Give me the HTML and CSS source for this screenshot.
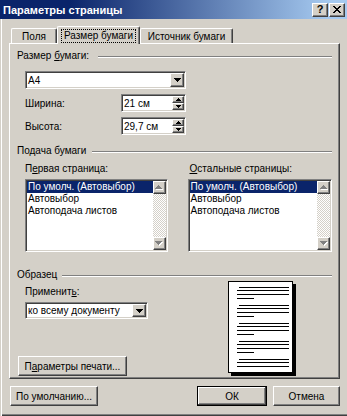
FILE: index.html
```html
<!DOCTYPE html>
<html lang="ru">
<head>
    <meta charset="UTF-8">
    <title>Параметры страницы</title>
    <link rel="stylesheet" href="styles.css">
</head>
<body>
    <div class="window">
        <div class="titlebar">
            <span class="title">Параметры страницы</span>
            <div class="caption">
                <span class="cap-btn help">?</span>
                <span class="cap-btn">
                    <svg width="8" height="7" viewBox="0 0 8 7"><path d="M0 0h2v1H0zM6 0h2v1H6zM1 1h2v1H1zM5 1h2v1H5zM2 2h4v1H2zM3 3h2v1H3zM2 4h4v1H2zM1 5h2v1H1zM5 5h2v1H5zM0 6h2v1H0zM6 6h2v1H6z"/></svg>
                </span>
            </div>
        </div>
        <div class="client">
            <div class="tabs">
                <div class="tab tab-1">Поля</div>
                <div class="tab tab-2 active"><span class="focus">Размер бумаги</span></div>
                <div class="tab tab-3">Источник бумаги</div>
            </div>
            <div class="panel">
                <div class="group">
                    <span class="group-label w-size">Размер <u>б</u>умаги:</span>
                    <span class="group-line"></span>
                </div>
                <div class="field combo size-combo">
                    <span class="value">А4</span>
                    <span class="drop-btn">
                        <svg width="7" height="4" viewBox="0 0 7 4"><path d="M0 0h7v1H0zM1 1h5v1H1zM2 2h3v1H2zM3 3h1v1H3z"/></svg>
                    </span>
                </div>
                <div class="spin-row">
                    <span class="spin-label">Ширина:</span>
                    <div class="field spin">
                        <span class="value">21 см</span>
                        <span class="spin-btns">
                            <span class="spin-btn"><svg width="5" height="3" viewBox="0 0 5 3"><path d="M2 0h1v1H2zM1 1h3v1H1zM0 2h5v1H0z"/></svg></span>
                            <span class="spin-btn"><svg width="5" height="3" viewBox="0 0 5 3"><path d="M0 0h5v1H0zM1 1h3v1H1zM2 2h1v1H2z"/></svg></span>
                        </span>
                    </div>
                </div>
                <div class="spin-row">
                    <span class="spin-label">Высота:</span>
                    <div class="field spin">
                        <span class="value">29,7 см</span>
                        <span class="spin-btns">
                            <span class="spin-btn"><svg width="5" height="3" viewBox="0 0 5 3"><path d="M2 0h1v1H2zM1 1h3v1H1zM0 2h5v1H0z"/></svg></span>
                            <span class="spin-btn"><svg width="5" height="3" viewBox="0 0 5 3"><path d="M0 0h5v1H0zM1 1h3v1H1zM2 2h1v1H2z"/></svg></span>
                        </span>
                    </div>
                </div>

                <div class="group group-feed">
                    <span class="group-label w-feed">Подача бумаги</span>
                    <span class="group-line"></span>
                </div>
                <div class="columns">
                    <div class="col col-left">
                        <div class="col-label">П<u>е</u>рвая страница:</div>
                        <div class="field listbox">
                            <div class="items">
                                <div class="item sel">По умолч. (Автовыбор)</div>
                                <div class="item">Автовыбор</div>
                                <div class="item">Автоподача листов</div>
                            </div>
                            <div class="scroll">
                                <span class="scroll-btn"><svg width="8" height="5" viewBox="0 0 8 5"><path fill="#fff" d="M4 1h1v1H4zM3 2h3v1H3zM2 3h5v1H2zM1 4h7v1H1z"/><path fill="#808080" d="M3 0h1v1H3zM2 1h3v1H2zM1 2h5v1H1zM0 3h7v1H0z"/></svg></span>
                                <span class="scroll-track"></span>
                                <span class="scroll-btn"><svg width="8" height="5" viewBox="0 0 8 5"><path fill="#fff" d="M1 1h7v1H1zM2 2h5v1H2zM3 3h3v1H3zM4 4h1v1H4z"/><path fill="#808080" d="M0 0h7v1H0zM1 1h5v1H1zM2 2h3v1H2zM3 3h1v1H3z"/></svg></span>
                            </div>
                        </div>
                    </div>
                    <div class="col col-right">
                        <div class="col-label label-right"><u>О</u>стальные страницы:</div>
                        <div class="field listbox">
                            <div class="items">
                                <div class="item sel">По умолч. (Автовыбор)</div>
                                <div class="item">Автовыбор</div>
                                <div class="item">Автоподача листов</div>
                            </div>
                            <div class="scroll">
                                <span class="scroll-btn"><svg width="8" height="5" viewBox="0 0 8 5"><path fill="#fff" d="M4 1h1v1H4zM3 2h3v1H3zM2 3h5v1H2zM1 4h7v1H1z"/><path fill="#808080" d="M3 0h1v1H3zM2 1h3v1H2zM1 2h5v1H1zM0 3h7v1H0z"/></svg></span>
                                <span class="scroll-track"></span>
                                <span class="scroll-btn"><svg width="8" height="5" viewBox="0 0 8 5"><path fill="#fff" d="M1 1h7v1H1zM2 2h5v1H2zM3 3h3v1H3zM4 4h1v1H4z"/><path fill="#808080" d="M0 0h7v1H0zM1 1h5v1H1zM2 2h3v1H2zM3 3h1v1H3z"/></svg></span>
                            </div>
                        </div>
                    </div>
                </div>

                <div class="group group-sample">
                    <span class="group-label w-sample">Образец</span>
                    <span class="group-line"></span>
                </div>
                <div class="sample">
                    <div class="sample-left">
                        <div class="apply-label">Применит<u>ь</u>:</div>
                        <div class="field combo apply-combo">
                            <span class="value">ко всему документу</span>
                            <span class="drop-btn">
                                <svg width="7" height="4" viewBox="0 0 7 4"><path d="M0 0h7v1H0zM1 1h5v1H1zM2 2h3v1H2zM3 3h1v1H3z"/></svg>
                            </span>
                        </div>
                        <div class="btn print-btn">П<u>а</u>раметры печати...</div>
                    </div>
                    <div class="page">
                        <svg width="63" height="90" viewBox="0 0 63 90">
                            <path d="M10 5h50v1H10zM8 8h52v1H8zM8 12h52v1H8zM8 16h17v1H8z
                                     M10 23h50v1H10zM8 26h52v1H8zM8 30h52v1H8zM8 34h17v1H8z
                                     M10 41h50v1H10zM8 44h52v1H8zM8 48h52v1H8zM8 52h17v1H8z
                                     M10 59h50v1H10zM8 62h52v1H8zM8 66h52v1H8zM8 70h17v1H8z
                                     M10 77h50v1H10zM8 80h52v1H8zM8 84h52v1H8z"/>
                        </svg>
                    </div>
                </div>
            </div>
            <div class="footer">
                <div class="btn defaults-btn">По умолчанию...</div>
                <div class="btn btn-default ok-btn">ОК</div>
                <div class="btn cancel-btn">Отмена</div>
            </div>
        </div>
    </div>
</body>
</html>
```

FILE: styles.css
```css
* {
    box-sizing: border-box;
}

body {
    margin: 0;
    font-family: "Liberation Sans", Arial, sans-serif;
    font-size: 10px;
    color: #000;
    background: #d4d0c8;
}

u {
    text-decoration: underline;
    text-underline-offset: 1px;
}

.window {
    width: 347px;
    height: 416px;
    display: flex;
    flex-direction: column;
    background: #d4d0c8;
    box-shadow: inset 0 -1px #404040, inset 0 -2px #808080;
    overflow: hidden;
}

/* title bar */
.titlebar {
    flex: none;
    height: 19px;
    display: flex;
    align-items: center;
    justify-content: space-between;
    padding: 0 2px 0 3px;
    background: linear-gradient(to right, #0a246a 0%, #0a246a 20%, #a6caf0 95%);
}

.title {
    color: #fff;
    font-weight: bold;
    font-size: 11px;
}

.caption {
    display: flex;
    gap: 1px;
}

.cap-btn {
    width: 16px;
    height: 14px;
    display: flex;
    align-items: center;
    justify-content: center;
    background: #d4d0c8;
    border: 1px solid;
    border-color: #fff #404040 #404040 #fff;
    box-shadow: inset -1px -1px #808080;
}

.help {
    font-weight: bold;
    font-size: 11px;
    line-height: 1;
}

/* client area */
.client {
    flex: 1;
    padding: 7px 7px 0 9px;
    box-shadow: inset 1px 0 #d4d0c8, inset 2px 0 #fff;
}

.tabs {
    display: flex;
    align-items: flex-end;
    height: 17px;
    padding-left: 2px;
}

.tab {
    height: 15px;
    display: flex;
    align-items: center;
    justify-content: center;
    border: 1px solid;
    border-bottom: 0;
    border-color: #fff #404040 #404040 #fff;
    border-radius: 2px 2px 0 0;
    box-shadow: inset -1px 0 #808080;
    white-space: nowrap;
}

.tab-1 { width: 46px; }
.tab-2 { width: 83px; }
.tab-3 { width: 93px; }

.tab.active {
    height: 18px;
    margin-bottom: -1px;
    position: relative;
    z-index: 1;
    background: #d4d0c8;
    align-items: flex-start;
    padding-top: 3px;
}

.focus {
    outline: 1px dotted #000;
    padding: 0 2px;
    line-height: 12px;
}

.panel {
    width: 331px;
    height: 336px;
    display: flex;
    flex-direction: column;
    padding: 6px 7px 0 7px;
    border: 1px solid;
    border-color: #fff #404040 #404040 #fff;
    box-shadow: inset -1px -1px #808080;
}

/* group headers */
.group {
    display: flex;
    align-items: center;
    height: 12px;
    line-height: 12px;
    flex: none;
}

.group-label {
    flex: none;
    white-space: nowrap;
}

.w-size { width: 81px; }
.w-feed { width: 75px; }
.w-sample { width: 45px; }

.group-line {
    flex: 1;
    height: 2px;
    margin-top: 2px;
    border-top: 1px solid #808080;
    border-bottom: 1px solid #fff;
}

.group-feed { margin-top: 10px; }
.group-sample { margin-top: 17px; }

/* sunken fields */
.field {
    display: flex;
    align-items: center;
    padding: 1px;
    background: #fff;
    border: 1px solid;
    border-color: #808080 #fff #fff #808080;
    box-shadow: inset 1px 1px #404040, inset -1px -1px #d4d0c8;
    flex: none;
}

.value {
    padding-left: 1px;
    white-space: nowrap;
}

.combo {
    height: 18px;
}

.size-combo {
    margin: 9px 0 0 8px;
    width: 161px;
}

.drop-btn,
.spin-btn,
.scroll-btn {
    display: flex;
    align-items: center;
    justify-content: center;
    background: #d4d0c8;
    border: 1px solid;
    border-color: #fff #404040 #404040 #fff;
    box-shadow: inset -1px -1px #808080;
}

.drop-btn {
    margin-left: auto;
    width: 14px;
    height: 14px;
}

.apply-combo .drop-btn {
    height: 13px;
}

.spin-row {
    display: flex;
    align-items: center;
    height: 18px;
    margin: 5px 0 0 8px;
}

.spin-label {
    width: 96px;
}

.spin {
    width: 65px;
    height: 18px;
}

.spin-btns {
    margin-left: auto;
    width: 12px;
    height: 14px;
    display: flex;
    flex-direction: column;
}

.spin-btn {
    flex: 1;
}

/* paper source lists */
.columns {
    display: flex;
    gap: 20px;
    margin: 6px 0 0 8px;
}

.col-left { width: 143px; }
.col-right { width: 145px; }

.col-label {
    height: 12px;
    line-height: 12px;
    white-space: nowrap;
}

.label-right {
    padding-left: 2px;
}

.listbox {
    margin-top: 4px;
    height: 73px;
    align-items: stretch;
}

.items {
    flex: 1;
}

.item {
    height: 12px;
    line-height: 12px;
    padding-left: 1px;
    white-space: nowrap;
    overflow: hidden;
}

.item.sel {
    background: #0a246a;
    color: #fff;
}

.scroll {
    width: 13px;
    display: flex;
    flex-direction: column;
    background: repeating-conic-gradient(#fff 0 25%, #d4d0c8 0 50%) 0 0 / 2px 2px;
}

.scroll-btn {
    height: 13px;
    flex: none;
}

.scroll-track {
    flex: 1;
}

/* sample */
.sample {
    display: flex;
    flex: none;
}

.sample-left {
    width: 211px;
    display: flex;
    flex-direction: column;
}

.apply-label {
    margin: 5px 0 0 8px;
    height: 12px;
    line-height: 12px;
}

.apply-combo {
    margin: 4px 0 0 8px;
    width: 123px;
    height: 17px;
}

.page {
    width: 65px;
    height: 92px;
    background: #fff;
    border: 1px solid #000;
    box-shadow: 3px 3px 0 #000;
}

.page svg {
    display: block;
    shape-rendering: crispEdges;
}

/* buttons */
.btn {
    height: 20px;
    display: flex;
    align-items: center;
    justify-content: center;
    white-space: nowrap;
    background: #d4d0c8;
    border: 1px solid;
    border-color: #fff #404040 #404040 #fff;
    box-shadow: inset -1px -1px #808080;
}

.btn-default {
    border-color: #000;
    box-shadow: inset -1px -1px #404040, inset 1px 1px #fff, inset -2px -2px #808080;
}

.print-btn {
    margin: 37px 0 0 1px;
    width: 109px;
}

.footer {
    display: flex;
    margin-top: 7px;
    padding-left: 1px;
}

.defaults-btn { width: 88px; }

.ok-btn {
    margin-left: auto;
    width: 70px;
}

.cancel-btn {
    margin-left: 6px;
    width: 67px;
}
```
